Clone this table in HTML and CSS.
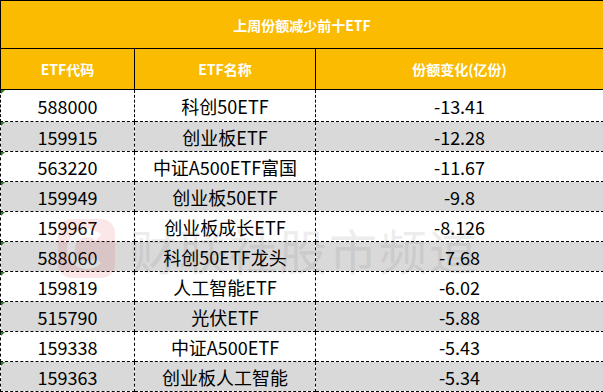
FILE: index.html
```html
<!DOCTYPE html>
<html>
<head>
    <title>上周份额减少前十ETF</title>
    <link rel="stylesheet" href="styles.css">
</head>
<body>
    <div class="sheet">
        <table class="etf-table">
            <colgroup>
                <col class="col-code">
                <col class="col-name">
                <col class="col-change">
            </colgroup>
            <thead>
                <tr class="title-row">
                    <th colspan="3">上周份额减少前十ETF</th>
                </tr>
                <tr class="head-row">
                    <th>ETF代码</th>
                    <th>ETF名称</th>
                    <th>份额变化(亿份)</th>
                </tr>
            </thead>
            <tbody>
                <tr class="first"><td class="code">588000</td><td>科创50ETF</td><td>-13.41</td></tr>
                <tr class="alt"><td class="code">159915</td><td>创业板ETF</td><td>-12.28</td></tr>
                <tr><td class="code">563220</td><td>中证A500ETF富国</td><td>-11.67</td></tr>
                <tr class="alt"><td class="code">159949</td><td>创业板50ETF</td><td>-9.8</td></tr>
                <tr><td class="code">159967</td><td>创业板成长ETF</td><td>-8.126</td></tr>
                <tr class="alt"><td class="code">588060</td><td>科创50ETF龙头</td><td>-7.68</td></tr>
                <tr><td class="code">159819</td><td>人工智能ETF</td><td>-6.02</td></tr>
                <tr class="alt"><td class="code">515790</td><td>光伏ETF</td><td>-5.88</td></tr>
                <tr><td class="code">159338</td><td>中证A500ETF</td><td>-5.43</td></tr>
                <tr class="alt"><td class="code">159363</td><td>创业板人工智能</td><td>-5.34</td></tr>
            </tbody>
        </table>

        <div class="watermark">
            <div class="wm-logo"><span></span></div>
            <div class="wm-text">财联社股市频道</div>
        </div>
    </div>
</body>
</html>
```

FILE: styles.css
```css
body {
    margin: 0;
    padding: 0;
    background: #ffffff;
    font-family: "Noto Sans CJK SC", "Noto Sans", sans-serif;
    color: #000000;
}

.sheet {
    position: relative;
    width: 603px;
    height: 392px;
    overflow: hidden;
}

.etf-table {
    width: 603px;
    border-collapse: collapse;
    table-layout: fixed;
}

.col-code { width: 134px; }
.col-name { width: 181px; }
.col-change { width: 288px; }

.etf-table th {
    background: #fabb00;
    color: #ffffff;
    font-weight: bold;
    font-size: 14px;
    border: 1px solid #000000;
    padding: 0;
    text-align: center;
}

.title-row th {
    height: 47px;
}

.head-row th {
    height: 40px;
}

.etf-table td {
    position: relative;
    height: 29px;
    padding: 0;
    border: 1px dashed #000000;
    text-align: center;
    font-size: 18px;
    line-height: 20px;
    background: #ffffff;
}

.etf-table tr.first td {
    height: 31px;
}

.etf-table tr.alt td {
    background: #d9d9d9;
}

/* green marker excel puts on numbers stored as text */
.etf-table td.code::before {
    content: "";
    position: absolute;
    left: 0;
    top: 0;
    border-top: 4px solid #1e8a1e;
    border-right: 4px solid transparent;
}

.watermark {
    position: absolute;
    left: 58px;
    top: 219px;
    display: flex;
    align-items: center;
    gap: 14px;
    opacity: 0.1;
    pointer-events: none;
}

.wm-logo {
    width: 57px;
    height: 59px;
    border-radius: 14px;
    background: #e0202a;
    display: flex;
    align-items: center;
    justify-content: center;
}

.wm-logo span {
    width: 24px;
    height: 24px;
    border: 8px solid #ffffff;
    border-right-color: transparent;
    border-radius: 50%;
}

.wm-text {
    font-size: 48px;
    line-height: 58px;
    color: #555555;
    letter-spacing: 2px;
}
```
